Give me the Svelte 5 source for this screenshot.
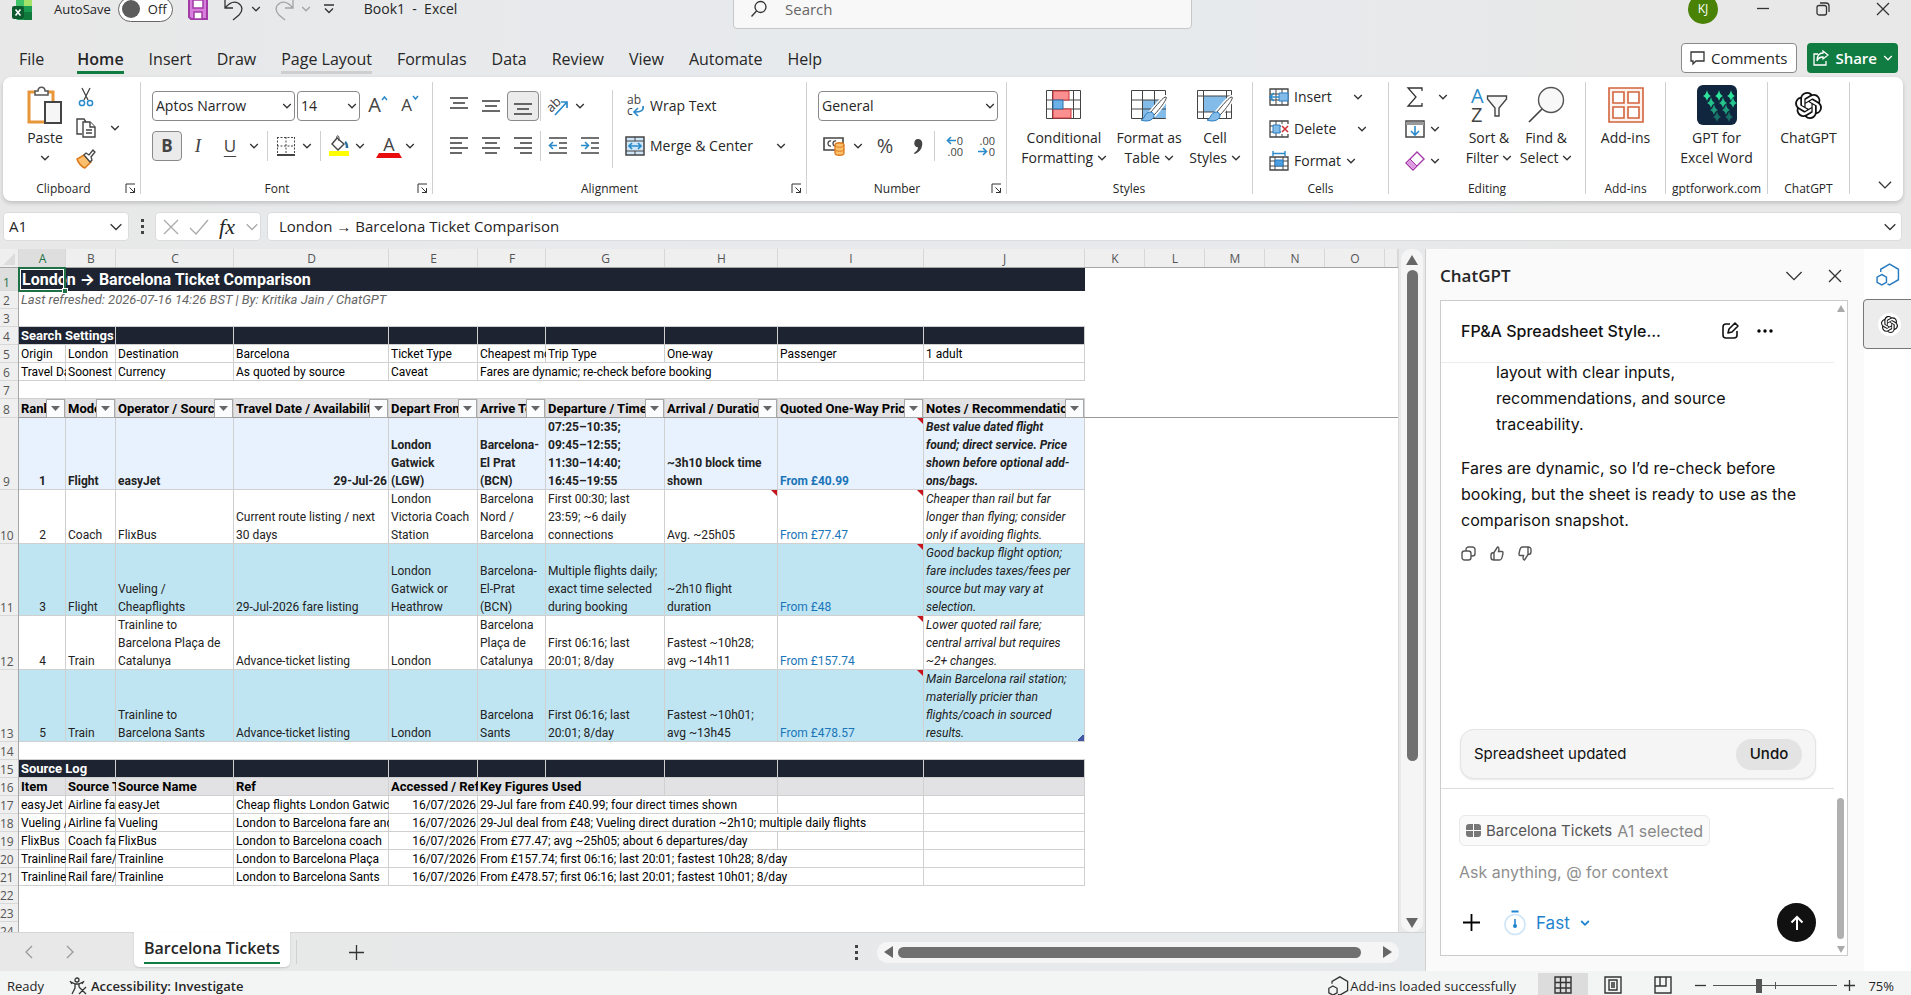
<script lang="ts">
	type Cell = { t?: string; span?: number; cls?: string };
	type Row = { n: number; height: number; kind: string; cells: Cell[] };

	const tabs = ['File', 'Home', 'Insert', 'Draw', 'Page Layout', 'Formulas', 'Data', 'Review', 'View', 'Automate', 'Help'];

	const columns = [
		{ name: 'A', width: 47 },
		{ name: 'B', width: 50 },
		{ name: 'C', width: 118 },
		{ name: 'D', width: 155 },
		{ name: 'E', width: 89 },
		{ name: 'F', width: 68 },
		{ name: 'G', width: 119 },
		{ name: 'H', width: 113 },
		{ name: 'I', width: 146 },
		{ name: 'J', width: 161 },
		{ name: 'K', width: 60 },
		{ name: 'L', width: 60 },
		{ name: 'M', width: 60 },
		{ name: 'N', width: 60 },
		{ name: 'O', width: 60 }
	];

	const texts = (...list: string[]): Cell[] => list.map((t) => ({ t }));
	const blanks = (count: number): Cell[] => Array.from({ length: count }, () => ({}));

	function fare(list: string[], noted = false): Cell[] {
		return list.map((t, i) => {
			if (i === 0) return { t, cls: 'center' };
			if (i === 7 && noted) return { t, cls: 'note' };
			if (i === 8) return { t, cls: 'price note' };
			if (i === 9) return { t, cls: 'italic' };
			return { t };
		});
	}

	function source(a: string, b: string, c: string, d: string, key: string, span: number): Cell[] {
		return [...texts(a, b, c, d), { t: '16/07/2026', cls: 'right' }, { t: key, span }, ...blanks(5 - span)];
	}

	const best = fare([
		'1', 'Flight', 'easyJet', '29-Jul-26', 'London\nGatwick\n(LGW)', 'Barcelona-\nEl Prat\n(BCN)',
		'07:25–10:35;\n09:45–12:55;\n11:30–14:40;\n16:45–19:55', '~3h10 block time\nshown', 'From £40.99',
		'Best value dated flight\nfound; direct service. Price\nshown before optional add-\nons/bags.'
	]);
	best[3].cls = 'right';

	const last = fare([
		'5', 'Train', 'Trainline to\nBarcelona Sants', 'Advance-ticket listing', 'London', 'Barcelona\nSants',
		'First 06:16; last\n20:01; 8/day', 'Fastest ~10h01;\navg ~13h45', 'From £478.57',
		'Main Barcelona rail station;\nmaterially pricier than\nflights/coach in sourced\nresults.'
	]);
	last[9].cls = 'italic corner';

	const rows: Row[] = [
		{ n: 1, height: 23, kind: 'title', cells: [{ t: 'London → Barcelona Ticket Comparison', span: 10, cls: 'active' }] },
		{ n: 2, height: 18, kind: 'plain subtitle', cells: [{ t: 'Last refreshed: 2026-07-16 14:26 BST | By: Kritika Jain / ChatGPT', span: 10 }] },
		{ n: 3, height: 18, kind: 'plain edge', cells: [{ span: 10 }] },
		{ n: 4, height: 18, kind: 'dark', cells: [{ t: 'Search Settings', span: 2 }, ...blanks(8)] },
		{ n: 5, height: 18, kind: '', cells: texts('Origin', 'London', 'Destination', 'Barcelona', 'Ticket Type', 'Cheapest mode', 'Trip Type', 'One-way', 'Passenger', '1 adult') },
		{ n: 6, height: 18, kind: '', cells: [...texts('Travel Date', 'Soonest', 'Currency', 'As quoted by source', 'Caveat'), { t: 'Fares are dynamic; re-check before booking', span: 3 }, ...blanks(2)] },
		{ n: 7, height: 18, kind: 'plain edge', cells: [{ span: 10 }] },
		{ n: 8, height: 19, kind: 'filters', cells: texts('Rank', 'Mode', 'Operator / Source', 'Travel Date / Availability', 'Depart From', 'Arrive To', 'Departure / Times', 'Arrival / Duration', 'Quoted One-Way Price', 'Notes / Recommendation') },
		{ n: 9, height: 72, kind: 'best', cells: best },
		{
			n: 10, height: 54, kind: 'fare',
			cells: fare([
				'2', 'Coach', 'FlixBus', 'Current route listing / next\n30 days', 'London\nVictoria Coach\nStation', 'Barcelona\nNord /\nBarcelona',
				'First 00:30; last\n23:59; ~6 daily\nconnections', 'Avg. ~25h05', 'From £77.47',
				'Cheaper than rail but far\nlonger than flying; consider\nonly if avoiding flights.'
			], true)
		},
		{
			n: 11, height: 72, kind: 'fare banded',
			cells: fare([
				'3', 'Flight', 'Vueling /\nCheapflights', '29-Jul-2026 fare listing', 'London\nGatwick or\nHeathrow', 'Barcelona-\nEl-Prat\n(BCN)',
				'Multiple flights daily;\nexact time selected\nduring booking', '~2h10 flight\nduration', 'From £48',
				'Good backup flight option;\nfare includes taxes/fees per\nsource but may vary at\nselection.'
			])
		},
		{
			n: 12, height: 54, kind: 'fare',
			cells: fare([
				'4', 'Train', 'Trainline to\nBarcelona Plaça de\nCatalunya', 'Advance-ticket listing', 'London', 'Barcelona\nPlaça de\nCatalunya',
				'First 06:16; last\n20:01; 8/day', 'Fastest ~10h28;\navg ~14h11', 'From £157.74',
				'Lower quoted rail fare;\ncentral arrival but requires\n~2+ changes.'
			])
		},
		{ n: 13, height: 72, kind: 'fare banded', cells: last },
		{ n: 14, height: 18, kind: 'plain edge', cells: [{ span: 10 }] },
		{ n: 15, height: 18, kind: 'dark', cells: [{ t: 'Source Log', span: 2 }, ...blanks(8)] },
		{ n: 16, height: 18, kind: 'heads', cells: [...texts('Item', 'Source Type', 'Source Name', 'Ref', 'Accessed / Ref'), { t: 'Key Figures Used', span: 2 }, ...blanks(3)] },
		{ n: 17, height: 18, kind: '', cells: source('easyJet', 'Airline fare', 'easyJet', 'Cheap flights London Gatwick', '29-Jul fare from £40.99; four direct times shown', 3) },
		{ n: 18, height: 18, kind: '', cells: source('Vueling /', 'Airline fare', 'Vueling', 'London to Barcelona fare and', '29-Jul deal from £48; Vueling direct duration ~2h10; multiple daily flights', 4) },
		{ n: 19, height: 18, kind: '', cells: source('FlixBus', 'Coach fare', 'FlixBus', 'London to Barcelona coach', 'From £77.47; avg ~25h05; about 6 departures/day', 3) },
		{ n: 20, height: 18, kind: '', cells: source('Trainline', 'Rail fare/', 'Trainline', 'London to Barcelona Plaça', 'From £157.74; first 06:16; last 20:01; fastest 10h28; 8/day', 4) },
		{ n: 21, height: 18, kind: '', cells: source('Trainline', 'Rail fare/', 'Trainline', 'London to Barcelona Sants', 'From £478.57; first 06:16; last 20:01; fastest 10h01; 8/day', 4) },
		{ n: 22, height: 18, kind: 'plain', cells: [{ span: 10 }] },
		{ n: 23, height: 18, kind: 'plain', cells: [{ span: 10 }] },
		{ n: 24, height: 18, kind: 'plain', cells: [{ span: 10 }] }
	];

	let prompt = $state('');
	let zoom = $state(75);
</script>

{#snippet chev(size = 10)}
	<svg class="chev" width={size} height={size} viewBox="0 0 10 10"><path d="M1.2 3 5 6.8 8.8 3" vector-effect="non-scaling-stroke" /></svg>
{/snippet}

{#snippet hlines(lines: number[][])}
	<svg width="20" height="20" viewBox="0 0 20 20" class="ink">
		{#each lines as [x1, x2, y]}
			<path d="M{x1} {y}H{x2}" />
		{/each}
	</svg>
{/snippet}

{#snippet launcher()}
	<button class="launcher" aria-label="More options">
		<svg width="11" height="11" viewBox="0 0 11 11"><path d="M1 10V1h9M4.500 4.500l5 5M9.500 5v4.500H5" /></svg>
	</button>
{/snippet}

{#snippet gptMark(size: number)}
	<svg width={size} height={size} viewBox="0 0 24 24" fill="#111">
		<path d="M22.2819 9.8211a5.9847 5.9847 0 0 0-.5157-4.9108 6.0462 6.0462 0 0 0-6.5098-2.9A6.0651 6.0651 0 0 0 4.9807 4.1818a5.9847 5.9847 0 0 0-3.9977 2.9 6.0462 6.0462 0 0 0 .7427 7.0966 5.98 5.98 0 0 0 .511 4.9107 6.051 6.051 0 0 0 6.5146 2.9001A5.9847 5.9847 0 0 0 13.2599 24a6.0557 6.0557 0 0 0 5.7718-4.2058 5.9894 5.9894 0 0 0 3.9977-2.9001 6.0557 6.0557 0 0 0-.7475-7.0729zm-9.022 12.6081a4.4755 4.4755 0 0 1-2.8764-1.0408l.1419-.0804 4.7783-2.7582a.7948.7948 0 0 0 .3927-.6813v-6.7369l2.02 1.1686a.071.071 0 0 1 .038.052v5.5826a4.504 4.504 0 0 1-4.4945 4.4944zm-9.6607-4.1254a4.4708 4.4708 0 0 1-.5346-3.0137l.142.0852 4.783 2.7582a.7712.7712 0 0 0 .7806 0l5.8428-3.3685v2.3324a.0804.0804 0 0 1-.0332.0615L9.74 19.9502a4.4992 4.4992 0 0 1-6.1408-1.6464zM2.3408 7.8956a4.485 4.485 0 0 1 2.3655-1.9728V11.6a.7664.7664 0 0 0 .3879.6765l5.8144 3.3543-2.0201 1.1685a.0757.0757 0 0 1-.071 0l-4.8303-2.7865A4.504 4.504 0 0 1 2.3408 7.872zm16.5963 3.8558L13.1038 8.364 15.1192 7.2a.0757.0757 0 0 1 .071 0l4.8303 2.7913a4.4944 4.4944 0 0 1-.6765 8.1042v-5.6772a.79.79 0 0 0-.407-.667zm2.0107-3.0231l-.142-.0852-4.7735-2.7818a.7759.7759 0 0 0-.7854 0L9.409 9.2297V6.8974a.0662.0662 0 0 1 .0284-.0615l4.8303-2.7866a4.4992 4.4992 0 0 1 6.6802 4.66zM8.3065 12.863l-2.02-1.1638a.0804.0804 0 0 1-.038-.0567V6.0742a4.4992 4.4992 0 0 1 7.3757-3.4537l-.142.0805L8.704 5.459a.7948.7948 0 0 0-.3927.6813zm1.0976-2.3654l2.602-1.4998 2.6069 1.4998v2.9994l-2.5974 1.4997-2.6067-1.4997Z" />
	</svg>
{/snippet}

{#snippet hexes(color: string, size: number)}
	<svg width={size} height={size} viewBox="0 0 24 24" fill="none" stroke={color} stroke-width="1.4">
		<path d="M5.500 9.500V7L14 2l8.500 5v10L14 22l-2-1" />
		<path d="M6.500 12 11 14.500v5L6.500 22 2 19.500v-5z" />
	</svg>
{/snippet}

{#snippet brush()}
	<path d="M36 11c2 1-6 12-12 18l-3-3c5-6 13-16 15-15z" fill="#fff" stroke="#fff" stroke-width="4" />
	<path d="M36 11c2 1-6 12-12 18l-3-3c5-6 13-16 15-15z" fill="#fff" stroke="#444" />
	<path d="M20 26c3 0 4 2 4 4-1 5-8 6-13 4 4-1 3-7 9-8z" fill="#84bce9" stroke="#2b7cc0" />
{/snippet}

<div class="app">
	<header class="titlebar">
		<div class="title-left">
			<svg width="20" height="22" viewBox="0 0 20 22">
				<path d="M4 2a2 2 0 0 1 2-2h12a2 2 0 0 1 2 2v18a2 2 0 0 1-2 2H6a2 2 0 0 1-2-2z" fill="#1a9b50" />
				<path d="M4 0h8v8H4z" fill="#3fc46a" /><path d="M12 0h8v8h-8z" fill="#a3e36a" /><path d="M12 14h8v8h-8z" fill="#0f7a3c" />
				<rect y="8" width="12" height="13" rx="2" fill="#0c5a2d" />
				<path d="m3.500 11.500 5 6m0-6-5 6" stroke="#fff" stroke-width="1.600" />
			</svg>
			<span class="autosave" id="autosave">AutoSave</span>
			<button class="toggle" role="switch" aria-checked="false" aria-labelledby="autosave"><i></i>Off</button>
			<button class="bare save" aria-label="Save">
				<svg width="22" height="22" viewBox="0 0 22 22"><path d="M2 1h18v20H4l-2-2z" fill="#d67fdb" stroke="#a33aa8" stroke-width="2" /><path d="M6 2h10v8H6zM7 14h8v7H7z" fill="#fff" stroke="#a33aa8" stroke-width="1.500" /></svg>
			</button>
			<button class="bare undo" aria-label="Undo">
				<svg width="22" height="24" viewBox="0 0 22 24" class="line"><path d="M2 3v8h8M2 11C7 5 11 4 15 6c5 3 5 8 1 12l-6 5" /></svg>
				{@render chev()}
			</button>
			<button class="bare undo faint" aria-label="Redo">
				<svg width="22" height="24" viewBox="0 0 22 24" class="line"><path d="M20 3v8h-8M20 11C15 5 11 4 7 6c-5 3-5 8-1 12l6 5" /></svg>
				{@render chev()}
			</button>
			<button class="bare" aria-label="Customize toolbar">
				<svg width="12" height="12" viewBox="0 0 12 12" class="line"><path d="M1 2h10M2 5.500l4 4 4-4" /></svg>
			</button>
			<span class="docname">Book1&nbsp; -&nbsp; Excel</span>
		</div>
		<label class="search">
			<svg width="18" height="18" viewBox="0 0 18 18" class="line"><circle cx="10.500" cy="7" r="5.500" /><path d="m6.500 11-5 5.500" /></svg>
			<input type="search" placeholder="Search" />
		</label>
		<div class="title-right">
			<button class="avatar">KJ</button>
			<button class="bare" aria-label="Minimize"><svg width="14" height="14" viewBox="0 0 14 14" class="line"><path d="M1 6.500h12" /></svg></button>
			<button class="bare" aria-label="Restore"><svg width="14" height="14" viewBox="0 0 14 14" class="line"><rect x="1" y="3.500" width="9.500" height="9.500" rx="2" /><path d="M4 1h6a3 3 0 0 1 3 3v6" /></svg></button>
			<button class="bare" aria-label="Close"><svg width="14" height="14" viewBox="0 0 14 14" class="line"><path d="m1 1 12 12M13 1 1 13" /></svg></button>
		</div>
	</header>

	<nav class="tabs">
		{#each tabs as tab}
			<button class="tab" class:current={tab === 'Home'} class:hover={tab === 'Page Layout'}>{tab}</button>
		{/each}
		<span class="grow"></span>
		<button class="comments">
			<svg width="15" height="14" viewBox="0 0 15 14" class="line"><path d="M1 1h13v9H6l-3 3v-3H1z" /></svg>
			Comments
		</button>
		<button class="share">
			<svg width="16" height="16" viewBox="0 0 16 16" class="line"><path d="M5 4H1v11h12v-4M10 1l5 4-5 4V7C7 7 5 8 4 11c0-5 2-8 6-8z" /></svg>
			Share {@render chev()}
		</button>
	</nav>

	<section class="ribbon">
		<div class="group clipboard">
			<div class="body">
				<button class="big">
					<span class="pic"><svg width="36" height="38" viewBox="0 0 36 38"><path d="M8 6H2v30h15" fill="none" stroke="#e8963a" stroke-width="3" /><path d="M20 6h6v9" fill="none" stroke="#e8963a" stroke-width="3" /><path d="M8 9V5h3c0-5 7-5 7 0h3v4z" fill="#fff" stroke="#555" stroke-width="1.500" /><rect x="18" y="16" width="16" height="21" fill="#f6f6f6" stroke="#444" stroke-width="2" /></svg></span>
					<span>Paste</span>
					<span>{@render chev()}</span>
				</button>
				<div class="stack">
					<button class="small" aria-label="Cut"><svg width="16" height="20" viewBox="0 0 16 20" fill="none"><path d="m4 1 6 12M12 1 6 13" stroke="#444" stroke-width="1.300" /><circle cx="4" cy="16" r="2.600" stroke="#2b8ac9" stroke-width="1.500" /><circle cx="12" cy="16" r="2.600" stroke="#2b8ac9" stroke-width="1.500" /></svg></button>
					<button class="small copy" aria-label="Copy"><svg width="20" height="20" viewBox="0 0 20 20" fill="#fff" stroke="#444" stroke-width="1.400"><path d="M6 16H1V1h7l2 3" /><path d="M7 4h7l5 5v10H7z" /><path d="M14 4v5h5M10 12h6M10 15h6" /></svg>{@render chev()}</button>
					<button class="small" aria-label="Format painter"><svg width="20" height="20" viewBox="0 0 20 20"><path d="m8 6 7 7-6 6C6 18 2 14 1 10z" fill="#fbc06c" stroke="#dd7a1a" stroke-width="1.500" /><path d="m8 6 2-2 3 2 4-5 2 2-4 5 1 3-2 2z" fill="#fff" stroke="#444" stroke-width="1.300" /></svg></button>
				</div>
			</div>
			<div class="caption">Clipboard</div>
			{@render launcher()}
		</div>

		<div class="group font">
			<div class="body rows">
				<div class="line-row">
					<span class="combo family"><select aria-label="Font"><option>Aptos Narrow</option></select>{@render chev()}</span>
					<span class="combo size"><select aria-label="Font size"><option>14</option></select>{@render chev()}</span>
					<button class="ib letter" aria-label="Grow font">A<svg width="7" height="6" viewBox="0 0 7 6"><path d="m1 5 2.500-3L6 5" fill="none" stroke="#2b8ac9" stroke-width="1.500" /></svg></button>
					<button class="ib letter shrink" aria-label="Shrink font">A<svg width="7" height="6" viewBox="0 0 7 6"><path d="m1 1 2.500 3L6 1" fill="none" stroke="#2b8ac9" stroke-width="1.500" /></svg></button>
				</div>
				<div class="line-row">
					<button class="ib b on">B</button>
					<button class="ib i">I</button>
					<button class="ib u">U</button>
					<button class="dd" aria-label="Underline options">{@render chev()}</button>
					<span class="sep"></span>
					<button class="ib mid" aria-label="Borders"><svg width="20" height="20" viewBox="0 0 20 20" fill="none" stroke="#444"><path d="M1 1.500h18M1.500 1v18M18.500 1v18M10 1v18M1 10h18" stroke-dasharray="2 1.500" /><path d="M1 19h18" stroke-width="2" /></svg></button>
					<button class="dd" aria-label="Border options">{@render chev()}</button>
					<span class="sep"></span>
					<button class="ib mid" aria-label="Fill color"><svg width="22" height="22" viewBox="0 0 22 22"><path d="m9 3 7 6-6 6-6-6z" fill="#fff" stroke="#444" stroke-width="1.400" /><path d="M9 3c-1-3 2-3 2 0v3" fill="none" stroke="#444" /><path d="M17 7c2 1 2 4 2 6" fill="none" stroke="#2b6f9e" stroke-width="2.500" /><path d="M1 16h20v5H1z" fill="#ff0" /></svg></button>
					<button class="dd" aria-label="Fill options">{@render chev()}</button>
					<button class="ib mid fontcolor" aria-label="Font color">A</button>
					<button class="dd" aria-label="Font color options">{@render chev()}</button>
				</div>
			</div>
			<div class="caption">Font</div>
			{@render launcher()}
		</div>

		<div class="group align">
			<div class="body">
				<div class="rows">
					<div class="line-row">
						<button class="ib" aria-label="Top align">{@render hlines([[1, 19, 2], [4, 16, 7], [1, 19, 12]])}</button>
						<button class="ib" aria-label="Middle align">{@render hlines([[1, 19, 5], [4, 16, 10], [1, 19, 15]])}</button>
						<button class="ib on" aria-label="Bottom align">{@render hlines([[1, 19, 8], [4, 16, 13], [1, 19, 18]])}</button>
						<span class="sep tight"></span>
						<button class="ib" aria-label="Orientation"><svg width="22" height="22" viewBox="0 0 22 22"><text x="0" y="14" font-size="13" font-family="Open Sans" fill="#444" transform="rotate(-45 7 11)">ab</text><path d="M8 20 20 7M14 7h6v6" fill="none" stroke="#2b8ac9" stroke-width="1.700" /></svg></button>
						<button class="dd narrow" aria-label="Orientation options">{@render chev()}</button>
					</div>
					<div class="line-row">
						<button class="ib" aria-label="Align left">{@render hlines([[1, 19, 2], [1, 13, 7], [1, 19, 12], [1, 13, 17]])}</button>
						<button class="ib" aria-label="Center">{@render hlines([[1, 19, 2], [4, 16, 7], [1, 19, 12], [4, 16, 17]])}</button>
						<button class="ib" aria-label="Align right">{@render hlines([[1, 19, 2], [7, 19, 7], [1, 19, 12], [7, 19, 17]])}</button>
						<span class="sep tight"></span>
						<button class="ib" aria-label="Decrease indent"><svg width="20" height="20" viewBox="0 0 20 20" class="ink"><path d="M1 2h18M11 7h8M11 12h8M1 17h18" /><path class="blue" d="M9 9.500H2M5 6 1.500 9.500 5 13" /></svg></button>
						<button class="ib" aria-label="Increase indent"><svg width="20" height="20" viewBox="0 0 20 20" class="ink"><path d="M1 2h18M11 7h8M11 12h8M1 17h18" /><path class="blue" d="M1 9.500h7M5 6l3.500 3.500L5 13" /></svg></button>
					</div>
				</div>
				<span class="sep tall"></span>
				<div class="rows wide">
					<button class="texted"><svg width="20" height="22" viewBox="0 0 20 22"><text x="2" y="9" font-size="12" font-family="Open Sans" fill="#444">ab</text><text x="2" y="20" font-size="12" font-family="Open Sans" fill="#444">c</text><path d="M18 11c1 5-3 6-8 6M13 13l-4 4 4 4" fill="none" stroke="#2b8ac9" stroke-width="1.700" /></svg>Wrap Text</button>
					<button class="texted"><svg width="20" height="20" viewBox="0 0 20 20"><path d="M1 1h18v18H1z" fill="#cfe6f8" stroke="#444" stroke-width="1.500" /><path d="M10 1v4M10 15v4M1 5h18M1 15h18" stroke="#444" /><path d="M4 10h12M7 7l-3 3 3 3M13 7l3 3-3 3" fill="none" stroke="#2b8ac9" stroke-width="1.700" /></svg>Merge &amp; Center <span class="far">{@render chev()}</span></button>
				</div>
			</div>
			<div class="caption">Alignment</div>
			{@render launcher()}
		</div>

		<div class="group number">
			<div class="body rows">
				<span class="combo general"><select aria-label="Number format"><option>General</option></select>{@render chev()}</span>
				<div class="line-row">
					<button class="ib" aria-label="Accounting format"><svg width="22" height="20" viewBox="0 0 22 20"><path d="M1 2h19v12H1z" fill="#fff" stroke="#444" stroke-width="1.600" /><path d="M8 5c-4-1-4 6 0 5M13 5c-4-1-4 6 0 5" fill="none" stroke="#444" stroke-width="1.300" /><path d="M12 9c0-3 9-3 9 0v8c0 3-9 3-9 0z" fill="#fbc06c" stroke="#dd7a1a" stroke-width="1.300" /><path d="M12 9c0 3 9 3 9 0M12 13c0 3 9 3 9 0" fill="none" stroke="#dd7a1a" /></svg></button>
					<button class="dd" aria-label="Accounting options">{@render chev()}</button>
					<button class="ib percent">%</button>
					<button class="ib comma" aria-label="Comma style"><svg width="10" height="17" viewBox="0 0 12 20"><path d="M6 1c6 0 6 7 4 11-2 4-5 6-8 7l-1-1c3-2 5-4 5-7C0 11 0 1 6 1z" fill="#444" /></svg></button>
					<span class="sep"></span>
					<button class="ib decimal" aria-label="Increase decimal"><span><svg width="10" height="9" viewBox="0 0 10 9" class="ink"><path class="blue" d="M10 4.500H1M5 1 1.500 4.500 5 8" /></svg>0</span><span>.00</span></button>
					<button class="ib decimal" aria-label="Decrease decimal"><span>.00</span><span><svg width="10" height="9" viewBox="0 0 10 9" class="ink"><path class="blue" d="M0 4.500h9M5 1l3.500 3.500L5 8" /></svg>0</span></button>
				</div>
			</div>
			<div class="caption">Number</div>
			{@render launcher()}
		</div>

		<div class="group styles">
			<div class="body">
				<button class="big w92">
					<span class="pic"><svg width="38" height="38" viewBox="0 0 38 38"><path d="M1.500 4.500h34v28h-34z" fill="#fff" stroke="#444" /><path d="M1 14h35M1 23h35M7.500 4v28M28.500 4v28" stroke="#444" fill="none" /><path d="M8 5h16v9H8zM8 23h18v9H8z" fill="#fc8f8f" stroke="#d13438" /><path d="M8 14h10v9H8z" fill="#6cb0e8" stroke="#2b6fa8" /></svg></span>
					<span>Conditional</span><span>Formatting {@render chev()}</span>
				</button>
				<button class="big w72">
					<span class="pic"><svg width="38" height="38" viewBox="0 0 38 38"><path d="M1.500 4.500h34v28h-34z" fill="#fff" stroke="#444" /><path d="M12 14h24v18H12z" fill="#84bce9" /><path d="M1 14h35M1 23h35M12.500 4v28M24.500 4v28" stroke="#444" fill="none" />{@render brush()}</svg></span>
					<span>Format as</span><span>Table {@render chev()}</span>
				</button>
				<button class="big w54">
					<span class="pic"><svg width="38" height="38" viewBox="0 0 38 38"><path d="M1.500 4.500h34v28h-34z" fill="#fff" stroke="#444" /><path d="M8 10h22v16H8z" fill="#84bce9" /><path d="M1 10h35M1 26h35M7.500 4v28M30.500 4v28" stroke="#444" fill="none" />{@render brush()}</svg></span>
					<span>Cell</span><span>Styles {@render chev()}</span>
				</button>
			</div>
			<div class="caption">Styles</div>
		</div>

		<div class="group cells">
			<div class="body">
				<div class="stack">
					<button class="texted"><svg width="20" height="20" viewBox="0 0 20 20"><path d="M1 2h18v16H1z" fill="#fff" stroke="#444" stroke-width="1.300" /><path d="M1 7h18M1 13h18M7 2v16M13 2v16" stroke="#444" /><path d="M10 6h9v8h-9z" fill="#84bce9" stroke="#2b7cc0" /><path d="M10 10H1M5 6l-4 4 4 4" fill="none" stroke="#2b8ac9" stroke-width="1.700" /></svg>Insert <span class="push16">{@render chev()}</span></button>
					<button class="texted"><svg width="20" height="20" viewBox="0 0 20 20"><path d="M1 2h18v16H1z" fill="#fff" stroke="#444" stroke-width="1.300" /><path d="M1 7h18M1 13h18M7 2v16M13 2v16" stroke="#444" /><path d="M12 5h8v10h-8z" fill="#fff" /><path d="M4 6h7v8H4z" fill="#84bce9" stroke="#2b7cc0" /><path d="m13 7 6 6m0-6-6 6" stroke="#d13438" stroke-width="1.600" /></svg>Delete <span class="push16">{@render chev()}</span></button>
					<button class="texted"><svg width="20" height="20" viewBox="0 0 20 20"><path d="M1 6h18v13H1z" fill="#fff" stroke="#444" stroke-width="1.300" /><path d="M1 10h18M1 15h18M6 6v13M14 6v13" stroke="#444" /><path d="M6 9h8v6H6z" fill="#4d9fe0" stroke="#2b7cc0" /><path d="M4 2.500h12M4 0v5M16 0v5" stroke="#2b8ac9" stroke-width="1.400" /></svg>Format <span>{@render chev()}</span></button>
				</div>
			</div>
			<div class="caption">Cells</div>
		</div>

		<div class="group editing">
			<div class="body">
				<div class="stack">
					<button class="texted" aria-label="AutoSum"><svg width="20" height="20" viewBox="0 0 20 20" class="line"><path d="M17 4V1H3l8 9-8 9h14v-3" /></svg><span class="push8">{@render chev()}</span></button>
					<button class="texted" aria-label="Fill"><svg width="20" height="20" viewBox="0 0 20 20"><path d="M1 2h18v16H1z" fill="#fff" stroke="#444" stroke-width="1.500" /><path d="M1 3h18v3H1z" fill="#999" /><path d="M10 7v9M6 12l4 4 4-4" fill="none" stroke="#2b8ac9" stroke-width="1.600" /></svg>{@render chev()}</button>
					<button class="texted" aria-label="Clear"><svg width="20" height="20" viewBox="0 0 20 20"><path d="M12 1 19 8 8 19l-7-7z" fill="#fff" stroke="#a33aa8" stroke-width="1.400" /><path d="M5 8l7 7-4 4-7-7z" fill="#dd9be0" stroke="#a33aa8" /></svg>{@render chev()}</button>
				</div>
				<button class="big w54 sort">
					<span class="pic"><svg width="38" height="38" viewBox="0 0 38 38"><text x="1" y="17" font-size="20" font-family="Open Sans" fill="#2b8ac9">A</text><text x="1" y="36" font-size="20" font-family="Open Sans" fill="#444">Z</text><path d="M17.500 10h19v3L29 22v8h-4v-8l-7.500-9z" fill="#f6f6f6" stroke="#444" stroke-width="1.400" /></svg></span>
					<span>Sort &amp;</span><span>Filter {@render chev()}</span>
				</button>
				<button class="big w60">
					<span class="pic"><svg width="38" height="38" viewBox="0 0 38 38"><circle cx="24" cy="14" r="12.500" fill="#f8f8f8" stroke="#555" stroke-width="1.400" /><path d="M15 23 2 36" stroke="#444" stroke-width="1.700" /></svg></span>
					<span>Find &amp;</span><span>Select {@render chev()}</span>
				</button>
			</div>
			<div class="caption">Editing</div>
		</div>

		<div class="group addins">
			<div class="body">
				<button class="big">
					<span class="pic"><svg width="36" height="36" viewBox="0 0 36 36" fill="none" stroke="#d2643c" stroke-width="1.600"><path d="M1 1h34v34H1z" fill="#fdf3ee" /><path d="M5 5h11v11H5zM20 5h11v11H20zM5 20h11v11H5zM20 20h11v11H20z" fill="#fff" /></svg></span>
					<span>Add-ins</span>
				</button>
			</div>
			<div class="caption">Add-ins</div>
		</div>

		<div class="group gptwork">
			<div class="body">
				<button class="big">
					<span class="pic">
						<svg width="40" height="40" viewBox="0 0 40 40">
							<rect width="40" height="40" rx="6" fill="#10263e" />
							{#each [[10, 11, '#2ce59b'], [22, 11, '#2ce59b'], [34, 11, '#2ce59b'], [14, 18, '#25c48d'], [26, 18, '#25c48d'], [36, 18, '#25c48d'], [17, 25, '#1e9c7c'], [29, 25, '#1e9c7c'], [20, 32, '#1a6f66'], [32, 32, '#1a6f66']] as [x, y, color]}
								<path transform="translate({x} {y})" d="M0-6Q1-1 4 0 1 1 0 5-1 1-4 0-1-1 0-6z" fill={color} />
							{/each}
						</svg>
					</span>
					<span>GPT for</span><span>Excel Word</span>
				</button>
			</div>
			<div class="caption">gptforwork.com</div>
		</div>

		<div class="group chatgpt">
			<div class="body">
				<button class="big"><span class="pic">{@render gptMark(27)}</span><span>ChatGPT</span></button>
			</div>
			<div class="caption">ChatGPT</div>
		</div>

		<button class="collapse" aria-label="Collapse ribbon">{@render chev(16)}</button>
	</section>

	<div class="formula">
		<label class="namebox"><input aria-label="Name box" value="A1" />{@render chev(14)}</label>
		<span class="dots"><i></i><i></i><i></i></span>
		<div class="fx">
			<button class="bare" aria-label="Cancel"><svg width="16" height="16" viewBox="0 0 16 16" class="line"><path d="m1 1 14 14M15 1 1 15" /></svg></button>
			<button class="bare" aria-label="Enter"><svg width="20" height="16" viewBox="0 0 20 16" class="line"><path d="m1 9 6 6L19 1" /></svg></button>
			<button class="bare fxbtn">fx</button>
			{@render chev(14)}
		</div>
		<label class="input"><input aria-label="Formula bar" value="London → Barcelona Ticket Comparison" />{@render chev(14)}</label>
	</div>

	<main class="workspace">
		<section class="book">
			<div class="sheet-row">
				<div class="sheet">
					<table>
						<colgroup>
							<col style="width: 19px" />
							{#each columns as column}
								<col style="width: {column.width}px" />
							{/each}
							<col />
						</colgroup>
						<thead>
							<tr>
								<th class="corner-cell" aria-label="Select all"><svg width="12" height="12" viewBox="0 0 12 12"><path d="M12 0v12H0z" fill="#dcdcdc" /></svg></th>
								{#each columns as column}
									<th class:picked={column.name === 'A'}>{column.name}</th>
								{/each}
								<th></th>
							</tr>
						</thead>
						<tbody>
							{#each rows as row}
								<tr class={row.kind} style="height: {row.height}px">
									<th class:picked={row.n === 1}>{row.n}</th>
									{#each row.cells as cell}
										<td colspan={cell.span ?? 1} class={cell.cls}>
											<div>{cell.t ?? ''}</div>
											{#if row.kind === 'filters'}
												<button class="filter" aria-label="Filter {cell.t}"><svg width="9" height="5" viewBox="0 0 9 5"><path d="M0 0h9L4.500 5z" fill="#666" /></svg></button>
											{/if}
										</td>
									{/each}
									<td class="rest" colspan="6"></td>
								</tr>
							{/each}
						</tbody>
					</table>
				</div>
				<div class="vscroll">
					<svg width="12" height="10" viewBox="0 0 12 10"><path d="M6 0l6 10H0z" /></svg>
					<span class="thumb"></span>
					<span class="grow"></span>
					<svg width="12" height="10" viewBox="0 0 12 10"><path d="M6 10 0 0h12z" /></svg>
				</div>
			</div>
			<div class="sheetbar">
				<button class="bare nav" aria-label="Previous sheet"><svg width="8" height="14" viewBox="0 0 8 14" class="line"><path d="M7 1 1 7l6 6" /></svg></button>
				<button class="bare nav" aria-label="Next sheet"><svg width="8" height="14" viewBox="0 0 8 14" class="line"><path d="m1 1 6 6-6 6" /></svg></button>
				<button class="sheet-tab"><span>Barcelona Tickets</span></button>
				<span class="bar"></span>
				<button class="bare add" aria-label="New sheet"><svg width="15" height="15" viewBox="0 0 15 15" class="line"><path d="M7.500 0v15M0 7.500h15" /></svg></button>
				<span class="grow"></span>
				<span class="dots"><i></i><i></i><i></i></span>
				<div class="hscroll">
					<svg width="9" height="12" viewBox="0 0 9 12"><path d="M0 6 9 0v12z" /></svg>
					<span class="thumb"></span>
					<svg width="9" height="12" viewBox="0 0 9 12"><path d="M9 6 0 12V0z" /></svg>
				</div>
			</div>
		</section>

		<aside class="pane">
			<header>
				<h2>ChatGPT</h2>
				<button class="bare" aria-label="Pane options">{@render chev(20)}</button>
				<button class="bare" aria-label="Close pane"><svg width="14" height="14" viewBox="0 0 14 14" class="line"><path d="m1 1 12 12M13 1 1 13" /></svg></button>
			</header>
			<div class="chat">
				<div class="chat-main">
					<div class="chat-head">
						<h3>FP&amp;A Spreadsheet Style...</h3>
						<button class="bare" aria-label="New chat"><svg width="18" height="18" viewBox="0 0 18 18" fill="none" stroke="#111" stroke-width="1.600" stroke-linejoin="round"><path d="M9 2H5a3 3 0 0 0-3 3v8a3 3 0 0 0 3 3h8a3 3 0 0 0 3-3V9" /><path d="m7 11 1-4 6-6 3 3-6 6z" /></svg></button>
						<button class="bare" aria-label="More"><svg width="16" height="4" viewBox="0 0 16 4"><circle cx="2" cy="2" r="1.700" /><circle cx="8" cy="2" r="1.700" /><circle cx="14" cy="2" r="1.700" /></svg></button>
					</div>
					<div class="messages">
						<p class="item">layout with clear inputs, recommendations, and source traceability.</p>
						<p>Fares are dynamic, so I’d re-check before booking, but the sheet is ready to use as the comparison snapshot.</p>
						<div class="actions">
							<button class="bare" aria-label="Copy"><svg width="15" height="15" viewBox="0 0 15 15"><rect x="1" y="5" width="9" height="9" rx="2.500" /><path d="M5 5V3.500A2.500 2.500 0 0 1 7.500 1h4A2.500 2.500 0 0 1 14 3.500v4a2.500 2.500 0 0 1-2.500 2.500H10" /></svg></button>
							<button class="bare" aria-label="Good response"><svg width="14" height="15" viewBox="0 0 14 15"><path d="M4 6.500 7.500 1C9.500 1 9 4 8.500 5.500H12c1.500 0 1 2 .500 4-.500 3-1 4.500-3 4.500H4M4 6.500C2 6.500 1 7 1 9v2.500C1 13 2 14 4 14z" /></svg></button>
							<button class="bare" aria-label="Bad response"><svg width="14" height="15" viewBox="0 0 14 15"><path d="M10 8.500 6.500 14C4.500 14 5 11 5.500 9.500H2c-1.500 0-1-2-.500-4C2 2.500 2.500 1 4.500 1H10M10 8.500c2 0 3-.500 3-2.500V3.500C13 2 12 1 10 1z" /></svg></button>
						</div>
					</div>
					<div class="toast"><span>Spreadsheet updated</span><button>Undo</button></div>
					<div class="composer">
						<div class="chip">
							<svg width="15" height="13" viewBox="0 0 15 13" fill="#777"><path d="M0 3a3 3 0 0 1 3-3h4v6H0zM8 0h4a3 3 0 0 1 3 3v3H8zM0 7h7v6H3a3 3 0 0 1-3-3zM8 7h7v3a3 3 0 0 1-3 3H8z" /></svg>
							<span>Barcelona Tickets</span><em>A1 selected</em>
						</div>
						<input aria-label="Message" placeholder="Ask anything, @ for context" bind:value={prompt} />
						<div class="tools">
							<button class="bare" aria-label="Attach"><svg width="17" height="17" viewBox="0 0 17 17" stroke="#000" stroke-width="1.800"><path d="M8.500 0v17M0 8.500h17" /></svg></button>
							<button class="bare fast">
								<svg width="22" height="26" viewBox="0 0 22 26" fill="none"><circle cx="11" cy="14.500" r="10" stroke="#cfe5f8" stroke-width="1.600" /><path d="M7.500 1.500h7" stroke="#1f84cf" stroke-width="2" /><path d="M11 9v6" stroke="#1f84cf" stroke-width="1.600" /><circle cx="11" cy="16" r="2" fill="#1f84cf" /></svg>
								Fast {@render chev()}
							</button>
							<span class="grow"></span>
							<button class="send" aria-label="Send"><svg width="14" height="16" viewBox="0 0 14 16" fill="none" stroke="#fff" stroke-width="2"><path d="M7 15V2M1.500 7.500 7 2l5.500 5.500" /></svg></button>
						</div>
					</div>
				</div>
				<div class="chat-scroll">
					<svg width="8" height="7" viewBox="0 0 8 7"><path d="M4 0l4 7H0z" /></svg>
					<span class="grow"></span>
					<span class="thumb"></span>
					<svg width="8" height="7" viewBox="0 0 8 7"><path d="M4 7 0 0h8z" /></svg>
				</div>
			</div>
		</aside>

		<aside class="rail">
			<button class="bare" aria-label="Add-ins">{@render hexes('#2b7cc0', 25)}</button>
			<button class="rail-on" aria-label="ChatGPT"><span>{@render gptMark(17)}</span></button>
		</aside>
	</main>

	<footer class="status">
		<span>Ready</span>
		<button class="bare access">
			<svg width="18" height="18" viewBox="0 0 18 18" class="line"><circle cx="8" cy="3" r="2" /><path d="M2 5l4 2v4l-3 6M14 5l-4 2v3M6 7h4M10 10l7 7M17 10l-7 7M1 4l2 3M15 4l-2 3" /></svg>
			Accessibility: Investigate
		</button>
		<span class="grow"></span>
		<span class="loaded">{@render hexes('#333', 22)}Add-ins loaded successfully</span>
		<button class="view on" aria-label="Normal view"><svg width="18" height="18" viewBox="0 0 18 18"><path d="M1 1h16v16H1zM1 6.500h16M1 12h16M6.500 1v16M12 1v16" /></svg></button>
		<button class="view" aria-label="Page layout view"><svg width="18" height="18" viewBox="0 0 18 18"><path d="M1 1h16v16H1zM5 4h8v10H5zM7 7h4M7 9h4M7 11h4" /></svg></button>
		<button class="view" aria-label="Page break view"><svg width="18" height="18" viewBox="0 0 18 18"><path d="M1 1h16v16H1zM6 1v9h6V1M1 10h5" /></svg></button>
		<button class="bare zoomer" aria-label="Zoom out"><svg width="11" height="11" viewBox="0 0 11 11" class="line"><path d="M0 5.500h11" /></svg></button>
		<input class="zoom" type="range" min="10" max="190" aria-label="Zoom" bind:value={zoom} />
		<button class="bare zoomer" aria-label="Zoom in"><svg width="11" height="11" viewBox="0 0 11 11" class="line"><path d="M0 5.500h11M5.500 0v11" /></svg></button>
		<span class="percent-label">{zoom}%</span>
	</footer>
</div>

<style>
	:global(body) {
		margin: 0;
		overflow: hidden;
	}

	.app {
		display: flex;
		flex-direction: column;
		height: 100vh;
		overflow: hidden;
		background: linear-gradient(90deg, #e8e8e8, #e7eaed 40%, #e7eaed 65%, #e8e8e8 85%);
		color: #262626;
		font: 14px/20px 'Open Sans', 'Noto Sans', sans-serif;
	}

	.app *,
	.active::before,
	.active::after {
		box-sizing: border-box;
	}

	button,
	input,
	select {
		margin: 0;
		padding: 0;
		border: 0;
		background: none;
		color: inherit;
		font: inherit;
		outline: 0;
	}

	svg {
		display: block;
		flex: none;
		overflow: visible;
	}

	.chev,
	.line {
		fill: none;
		stroke: #333;
		stroke-width: 1.3;
	}

	.ink {
		fill: none;
		stroke: #444;
		stroke-width: 1.6;
	}

	.blue {
		stroke: #2b8ac9;
	}

	.grow {
		flex: 1;
	}

	.bare {
		display: flex;
		align-items: center;
		justify-content: center;
	}

	/* title bar: its upper part is scrolled out of the window */
	.titlebar {
		display: flex;
		align-items: center;
		justify-content: space-between;
		flex: none;
		height: 40px;
		margin-top: -11px;
		padding: 0 21px 0 12px;
	}

	.title-left,
	.title-right {
		display: flex;
		align-items: center;
		flex: 1 1 0;
	}

	.autosave {
		margin: 0 7px 0 22px;
		font-size: 13px;
	}

	.toggle {
		display: flex;
		align-items: center;
		gap: 8px;
		width: 55px;
		height: 25px;
		padding-left: 3px;
		border: 1px solid #666;
		border-radius: 13px;
		background: #fff;
		font-size: 13px;
	}

	.toggle i {
		width: 18px;
		height: 18px;
		border-radius: 9px;
		background: #5c5c5c;
	}

	.save {
		margin: 0 14px;
	}

	.undo {
		gap: 6px;
		margin-right: 12px;
	}

	.faint svg {
		stroke: #a3a3a3;
	}

	.docname {
		margin-left: 29px;
		font-size: 14px;
	}

	.search {
		display: flex;
		align-items: center;
		gap: 17px;
		flex: none;
		width: 459px;
		height: 40px;
		margin-left: 23px;
		padding-left: 16px;
		border: 1px solid #c8c8c8;
		border-radius: 4px;
		background: #f8f8f8;
	}

	.search input {
		flex: 1;
		font-size: 15px;
	}

	input::placeholder {
		color: #666;
		opacity: 1;
	}

	.title-right {
		justify-content: flex-end;
		gap: 46px;
	}

	.avatar {
		width: 30px;
		height: 30px;
		margin-right: -8px;
		border-radius: 15px;
		background: #498205;
		color: #fff;
		font-size: 12px;
	}

	.tabs {
		display: flex;
		align-items: flex-end;
		flex: none;
		height: 48px;
		padding: 0 13px 3px 7px;
	}

	.tab {
		height: 30px;
		margin: 0 13px 0 12px;
		padding-top: 3px;
		border-bottom: 3px solid transparent;
		font-size: 16px;
	}

	.tab:first-child {
		margin-right: 21px;
	}

	.tab.current {
		border-color: #107c41;
		font-weight: 600;
	}

	.tab.hover {
		border-color: #cfcfcf;
	}

	.comments,
	.share {
		display: flex;
		align-items: center;
		height: 30px;
		margin-bottom: 1px;
		border-radius: 4px;
		font-size: 15px;
	}

	.comments {
		gap: 6px;
		margin-right: 10px;
		padding: 0 9px 0 8px;
		border: 1px solid #8a8a8a;
		background: #fff;
	}

	.share {
		gap: 6px;
		padding: 0 5px 0 6px;
		background: #107c41;
		color: #fff;
		font-weight: 600;
	}

	.share svg {
		stroke: #fff;
	}

	.ribbon {
		display: flex;
		flex: none;
		height: 124px;
		margin: 0 8px 0 3px;
		border-radius: 8px;
		background: #fff;
		box-shadow: 0 2px 4px rgba(0, 0, 0, 0.18);
	}

	.group {
		position: relative;
		flex: none;
		display: flex;
		flex-direction: column;
		margin: 5px 0 7px;
		border-right: 1px solid #d0d0d0;
	}

	.body {
		display: flex;
		flex: 1;
	}

	.caption {
		height: 18px;
		margin-bottom: -4px;
		font-size: 12px;
		line-height: 18px;
		text-align: center;
		white-space: nowrap;
	}

	.launcher {
		position: absolute;
		right: 4px;
		bottom: 0;
	}

	.launcher svg {
		fill: none;
		stroke: #333;
	}

	.clipboard { width: 138px; padding-left: 14px; }
	.clipboard .caption { padding-right: 30px; }
	.font { width: 292px; padding-left: 11px; }
	.font .caption,
	.align .caption,
	.number .caption { padding-right: 30px; }
	.align { width: 374px; padding-left: 10px; }
	.number { width: 200px; padding-left: 11px; }
	.styles { width: 246px; padding-left: 11px; }
	.styles .caption { padding-right: 12px; }
	.cells { width: 136px; padding-left: 16px; }
	.cells .caption { padding-right: 16px; }
	.editing { width: 197px; padding-left: 16px; }
	.editing .caption { padding-right: 16px; }
	.addins { width: 80px; }
	.gptwork { width: 102px; }
	.chatgpt { width: 82px; }
	.addins .big,
	.gptwork .big,
	.chatgpt .big { flex: 1; }

	.rows {
		display: flex;
		flex-direction: column;
		gap: 10px;
		padding-top: 9px;
	}

	.line-row {
		display: flex;
		align-items: center;
		flex: none;
		height: 30px;
	}

	.big {
		display: flex;
		flex-direction: column;
		align-items: center;
		justify-content: flex-start;
		align-self: flex-start;
		padding-top: 4px;
		white-space: nowrap;
	}

	.big .chev {
		display: inline;
	}

	.pic {
		display: flex;
		align-items: center;
		justify-content: center;
		height: 38px;
		margin-bottom: 4px;
	}

	.clipboard .big { width: 56px; }
	.w92 { width: 92px; margin-right: 3px; }
	.w72 { width: 72px; margin-right: 3px; }
	.w54 { width: 54px; }
	.w60 { width: 60px; }
	.sort { margin-left: 14px; }

	.stack {
		display: flex;
		flex-direction: column;
	}

	.small {
		display: flex;
		align-items: center;
		justify-content: center;
		width: 26px;
		height: 32px;
	}

	.stack .texted,
	.small {
		margin-top: -1px;
	}

	.copy {
		width: 49px;
		gap: 14px;
	}

	.texted {
		display: flex;
		align-items: center;
		gap: 5px;
		height: 30px;
		white-space: nowrap;
	}

	.stack .texted {
		height: 33px;
	}

	.cells .stack,
	.editing .stack {
		margin-top: -1px;
	}

	.far { margin-left: 18px; }
	.push16 { margin-left: 16px; }
	.push8 { margin-left: 8px; }

	.wide {
		padding-left: 12px;
	}

	.combo {
		position: relative;
		display: block;
		flex: none;
		height: 30px;
		margin-right: 2px;
	}

	.combo select {
		appearance: none;
		width: 100%;
		height: 30px;
		padding-left: 3px;
		border: 1px solid #8a8a8a;
		border-radius: 4px;
		background: #fff;
	}

	.combo .chev {
		position: absolute;
		right: 3px;
		top: 10px;
	}

	.family { width: 143px; }
	.size { width: 63px; }
	.general { width: 180px; }

	.ib {
		display: flex;
		align-items: center;
		justify-content: center;
		flex: none;
		width: 32px;
		height: 30px;
		color: #444;
		font-size: 17px;
	}

	.ib.mid { width: 26px; }

	.ib.on {
		border: 1px solid #8a8a8a;
		border-radius: 4px;
		background: #ebebeb;
	}

	.ib.b { width: 30px; font-weight: 700; }
	.ib.i { font-family: 'Liberation Serif', serif; font-size: 19px; font-style: italic; }
	.ib.u { text-decoration: underline; text-underline-offset: 4px; }

	.ib.letter {
		align-items: flex-start;
		padding-top: 4px;
		font-size: 20px;
	}

	.ib.shrink {
		font-size: 17px;
	}

	.ib.fontcolor {
		height: 23px;
		margin-left: 8px;
		border-bottom: 5px solid #e80c0c;
		border-left: 3px solid #fff;
		border-right: 3px solid #fff;
		font-size: 18px;
	}

	.dd {
		display: flex;
		align-items: center;
		justify-content: center;
		width: 16px;
		height: 30px;
	}

	.dd.narrow { width: 12px; }

	.sep {
		flex: none;
		width: 1px;
		height: 30px;
		margin: 0 5px;
		background: #d0d0d0;
	}

	.sep.tight { margin: 0 1px; }

	.sep.tall {
		height: 78px;
		margin: 8px 0 0 6px;
	}

	.number .sep { margin: 0 2px; }
	.ib.percent { width: 38px; font-size: 20px; }
	.ib.comma { width: 28px; }

	.ib.decimal {
		flex-direction: column;
		align-items: flex-end;
		padding-right: 6px;
		font-size: 11px;
		line-height: 11px;
	}

	.decimal span {
		display: flex;
		align-items: center;
		gap: 1px;
	}

	.collapse {
		align-self: flex-end;
		margin: 0 10px 8px auto;
	}

	.formula {
		display: flex;
		align-items: center;
		flex: none;
		height: 29px;
		margin: 11px 9px 8px 3px;
	}

	.namebox,
	.fx,
	.input {
		display: flex;
		align-items: center;
		height: 29px;
		border: 1px solid #dcdcdc;
		border-radius: 4px;
		background: #fff;
	}

	.namebox {
		width: 126px;
		padding: 0 5px;
		font-size: 15px;
	}

	.namebox input,
	.input input {
		flex: 1;
		min-width: 0;
		height: 26px;
		padding-bottom: 2px;
	}

	.dots {
		display: flex;
		flex-direction: column;
		gap: 3px;
		width: 26px;
		align-items: center;
	}

	.dots i {
		width: 3px;
		height: 3px;
		background: #444;
	}

	.fx {
		justify-content: space-between;
		width: 106px;
		margin-right: 6px;
		padding: 0 1px 0 7px;
	}

	.fx .line,
	.fx .chev {
		stroke: #aaa;
	}

	.fxbtn {
		font: italic 22px/26px 'Liberation Serif', serif;
	}

	.input {
		flex: 1;
		padding: 0 4px 0 11px;
		font-size: 15px;
	}

	.workspace {
		display: flex;
		flex: 1;
		min-height: 0;
	}

	.book {
		display: flex;
		flex-direction: column;
		flex: 1;
		min-width: 0;
	}

	.sheet-row {
		display: flex;
		flex: 1;
		min-height: 0;
	}

	.sheet {
		flex: 1;
		min-width: 0;
		overflow: hidden;
		border-right: 1px solid #d8d8d8;
		background: #fff;
		font-family: Roboto, Inter, sans-serif;
		font-size: 12px;
		line-height: 18px;
	}

	table {
		width: 100%;
		table-layout: fixed;
		border-spacing: 0;
	}

	th,
	td {
		padding: 0;
	}

	th {
		background: #efefef;
		color: #555;
		font: 12px/17px 'Open Sans', sans-serif;
	}

	thead th {
		height: 19px;
		box-shadow: inset 0 -1px #a6a6a6, inset -1px 0 #d8d8d8;
	}

	th.picked {
		background: #dedede;
		color: #1e7145;
	}

	tbody th {
		padding-right: 6px;
		vertical-align: bottom;
		box-shadow: inset -1px 0 #a6a6a6, inset 0 -1px #d8d8d8;
	}

	.corner-cell svg {
		margin-left: 3px;
	}

	td {
		position: relative;
		vertical-align: bottom;
		color: #000;
		box-shadow: inset -1px -1px #d0d0d0;
	}

	td div {
		overflow: hidden;
		padding: 0 2px;
		white-space: pre;
	}

	td.rest,
	.plain td {
		box-shadow: none;
	}

	.edge td:not(.rest) {
		box-shadow: inset 0 -1px #d0d0d0;
	}

	.title td:not(.rest) {
		background: #1d2331;
		color: #fff;
		font-size: 16px;
		font-weight: 700;
		line-height: 23px;
		box-shadow: none;
	}

	.title td div {
		padding-left: 3px;
	}

	.active::after {
		content: '';
		position: absolute;
		left: -1px;
		top: -1px;
		width: 48px;
		height: 25px;
		border: 2px solid #1e7145;
		box-shadow: inset 0 0 0 1px #fff;
	}

	.active::before {
		content: '';
		position: absolute;
		left: 43px;
		top: 20px;
		z-index: 1;
		width: 6px;
		height: 6px;
		border: 1px solid #fff;
		background: #1e7145;
	}

	.subtitle td {
		color: #666;
		font-size: 13px;
		font-style: italic;
	}

	.dark td:not(.rest) {
		background: #1d2331;
		color: #fff;
		font-size: 13px;
		font-weight: 700;
	}

	.heads td:not(.rest),
	.filters td:not(.rest) {
		background: #e2e2e4;
		font-size: 13px;
		font-weight: 700;
	}

	.filters td {
		box-shadow: inset 0 -1px #999, inset -1px 0 #d0d0d0;
	}

	.filters td.rest {
		box-shadow: inset 0 -1px #999;
	}

	.filter {
		position: absolute;
		right: 1px;
		top: 0;
		display: flex;
		align-items: center;
		justify-content: center;
		width: 19px;
		height: 19px;
		border: 1px solid #a8a8a8;
		background: #fbfcfe;
	}

	.best td:not(.rest) {
		background: #e8f2fe;
		font-weight: 700;
	}

	.best td,
	.fare td {
		color: #222;
	}

	.banded td:not(.rest) {
		background: #bfe5f3;
	}

	.center { text-align: center; }
	.right { text-align: right; }
	.italic { font-style: italic; }

	tr td.price {
		color: #1a75b8;
	}

	.note::after {
		content: '';
		position: absolute;
		top: 0;
		right: 1px;
		border-top: 6px solid #c8141c;
		border-left: 6px solid transparent;
	}

	.corner::after {
		content: '';
		position: absolute;
		right: 1px;
		bottom: 1px;
		width: 6px;
		height: 6px;
		background: linear-gradient(135deg, transparent 40%, #4355a5 40%);
	}

	.vscroll {
		display: flex;
		flex-direction: column;
		align-items: center;
		width: 22px;
		margin: 0 2px;
		padding: 6px 0 4px;
		border-radius: 10px;
		background: #f5f5f5;
	}

	.vscroll svg,
	.hscroll svg {
		fill: #666;
	}

	.vscroll .thumb {
		width: 11px;
		height: 73%;
		margin-top: 5px;
		border-radius: 6px;
		background: #707070;
	}

	.sheetbar {
		display: flex;
		align-items: center;
		flex: none;
		height: 39px;
		padding-right: 26px;
		border-top: 1px solid #d4d4d4;
		background: linear-gradient(90deg, #e8e8e8, #e6e9eb);
	}

	.nav {
		width: 41px;
	}

	.nav:first-child {
		margin-left: 8px;
	}

	.nav svg {
		stroke: #999;
	}

	.sheet-tab {
		align-self: flex-start;
		height: 35px;
		margin-left: 44px;
		margin-top: -1px;
		padding: 0 10px 3px;
		border-radius: 0 0 5px 5px;
		background: #fff;
		box-shadow: 0 1px 2px rgba(0, 0, 0, 0.15);
		font-size: 16px;
		font-weight: 600;
	}

	.sheet-tab span {
		display: block;
		padding-top: 2px;
		height: 32px;
		line-height: 28px;
		border-bottom: 2px solid #107c41;
	}

	.bar {
		width: 1px;
		height: 24px;
		margin-left: 6px;
		background: #d0d0d0;
	}

	.add {
		margin-left: 52px;
	}

	.sheetbar .dots {
		width: 42px;
	}

	.hscroll {
		display: flex;
		align-items: center;
		justify-content: space-between;
		width: 522px;
		height: 21px;
		padding: 0 7px;
		border-radius: 10px;
		background: #f5f5f5;
	}

	.hscroll .thumb {
		width: 463px;
		height: 11px;
		margin-right: 18px;
		border-radius: 6px;
		background: #707070;
	}

	.pane {
		display: flex;
		flex-direction: column;
		flex: none;
		width: 439px;
		padding: 0 16px 15px 14px;
		border-left: 1px solid #d0d0d0;
		background: #fafafa;
	}

	.pane header {
		display: flex;
		align-items: center;
		gap: 24px;
		flex: none;
		height: 51px;
		padding: 3px 6px 0 0;
	}

	h2 {
		flex: 1;
		margin: 0;
		font-size: 17px;
		font-weight: 600;
	}

	.chat {
		display: flex;
		flex: 1;
		min-height: 0;
		border: 1px solid #ccc;
		background: #fff;
		color: #111;
		font: 16px/26px Inter, sans-serif;
	}

	.chat-main {
		display: flex;
		flex-direction: column;
		flex: 1;
	}

	.chat-head {
		display: flex;
		align-items: center;
		gap: 18px;
		height: 62px;
		padding: 0 61px 1px 20px;
		border-bottom: 1px solid #ececec;
	}

	h3 {
		flex: 1;
		margin: 0;
		font-size: 16px;
		font-weight: 500;
	}

	.messages {
		flex: 1;
		padding: 0 20px;
	}

	p {
		width: 350px;
		margin: 0 0 18px;
	}

	p.item {
		width: 300px;
		margin-top: -4px;
		padding-left: 35px;
	}

	.actions {
		display: flex;
		gap: 14px;
		margin-top: -5px;
	}

	.actions svg {
		fill: none;
		stroke: #555;
		stroke-width: 1.4;
	}

	.toast {
		display: flex;
		align-items: center;
		justify-content: space-between;
		height: 50px;
		margin: 0 18px 9px 19px;
		padding: 0 13px;
		border: 1px solid #e4e4e4;
		border-radius: 14px;
		background: #f5f5f5;
		box-shadow: 0 1px 2px rgba(0, 0, 0, 0.1);
		font-size: 15px;
	}

	.toast button {
		width: 66px;
		height: 31px;
		border-radius: 16px;
		background: #e3e3e3;
		font-weight: 500;
	}

	.composer {
		display: flex;
		flex-direction: column;
		align-items: flex-start;
		height: 167px;
		padding: 26px 18px 0;
		border-top: 1px solid #ddd;
	}

	.chip {
		display: flex;
		align-items: center;
		gap: 5px;
		height: 31px;
		padding: 0 6px;
		border: 1px solid #e8e8e8;
		border-radius: 6px;
		background: #fafafa;
		color: #555;
		font-size: 15px;
	}

	.chip em {
		color: #888;
		font-size: 16px;
		font-style: normal;
	}

	.composer input {
		width: 100%;
		height: 26px;
		margin-top: 13px;
	}

	.composer input::placeholder {
		color: #8f8f8f;
	}

	.tools {
		display: flex;
		align-items: center;
		width: 100%;
		margin-top: 18px;
		padding-left: 4px;
	}

	.fast {
		gap: 10px;
		margin-left: 24px;
		color: #1f84cf;
		font-size: 17px;
	}

	.fast .chev {
		stroke: #1f84cf;
		stroke-width: 1.8;
	}

	.send {
		display: flex;
		align-items: center;
		justify-content: center;
		width: 39px;
		height: 39px;
		border-radius: 20px;
		background: #111;
	}

	.chat-scroll {
		display: flex;
		flex-direction: column;
		align-items: center;
		width: 13px;
		padding: 4px 0 2px;
		fill: #aaa;
	}

	.chat-scroll .thumb {
		width: 7px;
		height: 141px;
		margin-bottom: 7px;
		border-radius: 4px;
		background: #b0b0b0;
	}

	.rail {
		flex: none;
		width: 47px;
		background: #fff;
	}

	.rail .bare {
		width: 47px;
		height: 50px;
	}

	.rail-on {
		display: flex;
		align-items: center;
		justify-content: center;
		width: 52px;
		height: 50px;
		margin-left: -1px;
		border: 1px solid #777;
		border-radius: 4px;
		background: #ececec;
	}

	.rail-on span {
		display: flex;
		padding: 3px;
		border-radius: 12px;
		background: #fff;
	}

	.status {
		display: flex;
		align-items: center;
		flex: none;
		height: 24px;
		padding: 5px 17px 0 7px;
		background: #f3f4f4;
		font-size: 13px;
		line-height: 18px;
		white-space: nowrap;
	}

	.access {
		gap: 4px;
		margin-left: 25px;
		font-weight: 600;
	}

	.loaded {
		display: flex;
		align-items: center;
		gap: 1px;
		margin-right: 22px;
	}

	.view {
		display: flex;
		align-items: center;
		justify-content: center;
		flex: none;
		width: 50px;
		height: 24px;
		margin-top: -2px;
	}

	.view.on {
		background: #dcdcdc;
	}

	.view svg {
		fill: none;
		stroke: #333;
		stroke-width: 1.4;
	}

	.zoomer {
		margin: 0 7px;
	}

	.zoom {
		appearance: none;
		width: 124px;
		height: 14px;
		background: linear-gradient(#555, #555) center / 100% 1px no-repeat, linear-gradient(#555, #555) center / 1px 7px no-repeat;
	}

	.zoom::-webkit-slider-thumb {
		appearance: none;
		width: 6px;
		height: 14px;
		background: #555;
	}

	.percent-label {
		min-width: 32px;
		text-align: right;
	}
</style>
